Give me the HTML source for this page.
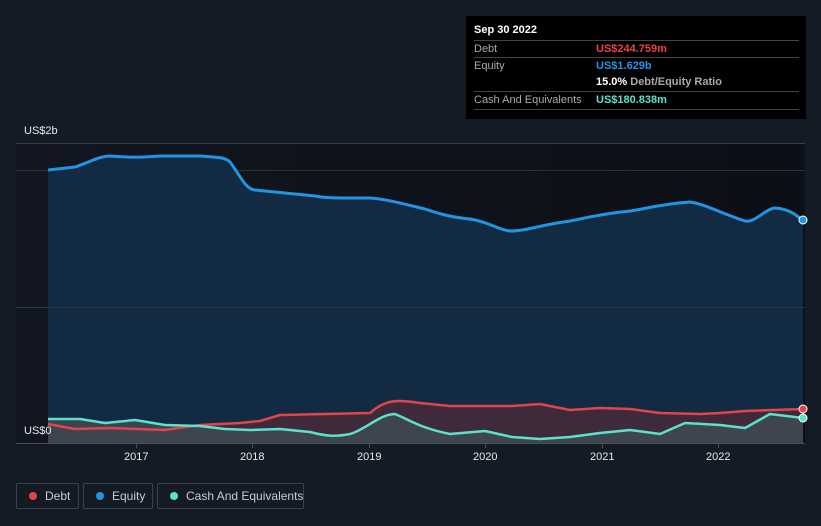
<!DOCTYPE html><html><head><style>
body{margin:0;width:821px;height:526px;background:#151b25;font-family:"Liberation Sans",sans-serif;position:relative;overflow:hidden}
.tt{position:absolute;left:466px;top:16px;width:340px;height:103px;background:#000;color:#fff;font-size:11px}
.tt .r{position:absolute;left:8px;width:325px;border-top:1px solid #444;height:17px;line-height:17px}
.tt .l{color:#aaa;position:absolute;left:0}
.tt .v{position:absolute;left:122px;font-weight:bold}
.leg{position:absolute;top:483px;height:26px;border:1px solid #3c424c;border-radius:2px;color:#c8ccd2;font-size:12px;line-height:24px;box-sizing:border-box;white-space:nowrap}
.leg i{position:absolute;left:12px;top:8px;width:8px;height:8px;border-radius:50%}
.ax{position:absolute;top:451px;color:#e8e8e8;font-size:11px}
</style></head><body>
<div class="tt">
<div style="position:absolute;left:8px;top:8px;font-weight:bold">Sep 30 2022</div>
<div class="r" style="top:24px"><span class="l">Debt</span><span class="v" style="color:#e8434a">US$244.759m</span></div>
<div class="r" style="top:41px"><span class="l">Equity</span><span class="v" style="color:#2394e3">US$1.629b</span></div>
<div class="r" style="top:58px;border-top:none"><span class="v">15.0% <span style="color:#aaa">Debt/Equity Ratio</span></span></div>
<div class="r" style="top:75px"><span class="l">Cash And Equivalents</span><span class="v" style="color:#5ee0cc">US$180.838m</span></div>
<div class="r" style="top:93px;height:0"></div>
</div>
<div style="position:absolute;left:24px;top:125px;color:#e8e8e8;font-size:11px">US$2b</div>
<svg width="821" height="526" style="position:absolute;left:0;top:0">
<defs><linearGradient id="bg" x1="0" y1="0" x2="1" y2="0"><stop offset="0" stop-color="#111620"/><stop offset="1" stop-color="#0c0f15"/></linearGradient></defs>
<rect x="16" y="143" width="789" height="300" fill="url(#bg)"/>
<line x1="16" y1="143.5" x2="805" y2="143.5" stroke="#3a3e45"/>
<line x1="16" y1="170.5" x2="805" y2="170.5" stroke="#2c3038"/>
<path d="M48,170 L75,167 C90,162 100,156 110,156 C125,157 135,158 160,156 L200,156 C215,157 225,157 230,162 C240,175 245,189 255,190 L315,196 C325,198 330,198 370,198 C385,199 400,203 425,209 C440,214 450,217 470,219 C490,222 500,231 512,231 C525,231 540,225 570,221 C585,218 600,214 630,211 C645,209 660,204 690,202 C705,204 720,213 745,221 C755,223 765,209 775,208 C790,209 795,215 803,220 L803,443 L48,443Z" fill="#132c45" opacity=".95"/>
<line x1="16" y1="307.5" x2="805" y2="307.5" stroke="#24344a"/>
<path d="M48,424 L75,429 L110,428 L165,430 L200,425 L240,423 L260,421 L280,415 L370,413 C385,400 395,399 420,403 L450,406 L512,406 L540,404 L570,410 L600,408 L630,409 L660,413 L700,414 L720,413 L745,411 L803,409 L803,443 L48,443Z" fill="#4a2a38" opacity=".8"/>
<path d="M48,419 L80,419 L105,423 L135,420 L165,425 L200,426 L225,429 L250,430 L280,429 L310,432 C325,436 335,437 350,434 C365,430 380,414 395,414 C410,420 420,428 450,434 L485,431 L512,437 L540,439 L570,437 L600,433 L630,430 L660,434 L685,423 L720,425 L745,428 L770,414 L803,418 L803,443 L48,443Z" fill="#3e4a52" opacity=".85"/>
<path d="M48,170 L75,167 C90,162 100,156 110,156 C125,157 135,158 160,156 L200,156 C215,157 225,157 230,162 C240,175 245,189 255,190 L315,196 C325,198 330,198 370,198 C385,199 400,203 425,209 C440,214 450,217 470,219 C490,222 500,231 512,231 C525,231 540,225 570,221 C585,218 600,214 630,211 C645,209 660,204 690,202 C705,204 720,213 745,221 C755,223 765,209 775,208 C790,209 795,215 803,220" fill="none" stroke="#2394e3" stroke-width="3"/>
<path d="M48,424 L75,429 L110,428 L165,430 L200,425 L240,423 L260,421 L280,415 L370,413 C385,400 395,399 420,403 L450,406 L512,406 L540,404 L570,410 L600,408 L630,409 L660,413 L700,414 L720,413 L745,411 L803,409" fill="none" stroke="#e0444c" stroke-width="2.5" stroke-linejoin="round"/>
<path d="M48,419 L80,419 L105,423 L135,420 L165,425 L200,426 L225,429 L250,430 L280,429 L310,432 C325,436 335,437 350,434 C365,430 380,414 395,414 C410,420 420,428 450,434 L485,431 L512,437 L540,439 L570,437 L600,433 L630,430 L660,434 L685,423 L720,425 L745,428 L770,414 L803,418" fill="none" stroke="#5ee0cc" stroke-width="2.5" stroke-linejoin="round"/>
<line x1="16" y1="443.5" x2="805" y2="443.5" stroke="#4a4e55"/>
<g stroke="#4a4e55"><line x1="136.5" y1="443" x2="136.5" y2="448"/><line x1="252.5" y1="443" x2="252.5" y2="448"/><line x1="369.5" y1="443" x2="369.5" y2="448"/><line x1="485.5" y1="443" x2="485.5" y2="448"/><line x1="602.5" y1="443" x2="602.5" y2="448"/><line x1="718.5" y1="443" x2="718.5" y2="448"/></g>
<circle cx="803" cy="220" r="4" fill="#2394e3" stroke="#fff" stroke-width="1"/>
<circle cx="803" cy="409" r="4" fill="#e0444c" stroke="#fff" stroke-width="1"/>
<circle cx="803" cy="418" r="4" fill="#5ee0cc" stroke="#fff" stroke-width="1"/>
</svg>
<div style="position:absolute;left:24px;top:425px;color:#e8e8e8;font-size:11px">US$0</div>
<div class="ax" style="left:124px">2017</div><div class="ax" style="left:240px">2018</div><div class="ax" style="left:357px">2019</div><div class="ax" style="left:473px">2020</div><div class="ax" style="left:590px">2021</div><div class="ax" style="left:706px">2022</div>
<div class="leg" style="left:16px;width:63px;padding-left:28px"><i style="background:#e0444c"></i>Debt</div>
<div class="leg" style="left:83px;width:70px;padding-left:28px"><i style="background:#2394e3"></i>Equity</div>
<div class="leg" style="left:157px;width:147px;padding-left:28px"><i style="background:#5ee0cc"></i>Cash And Equivalents</div>
</body></html>
